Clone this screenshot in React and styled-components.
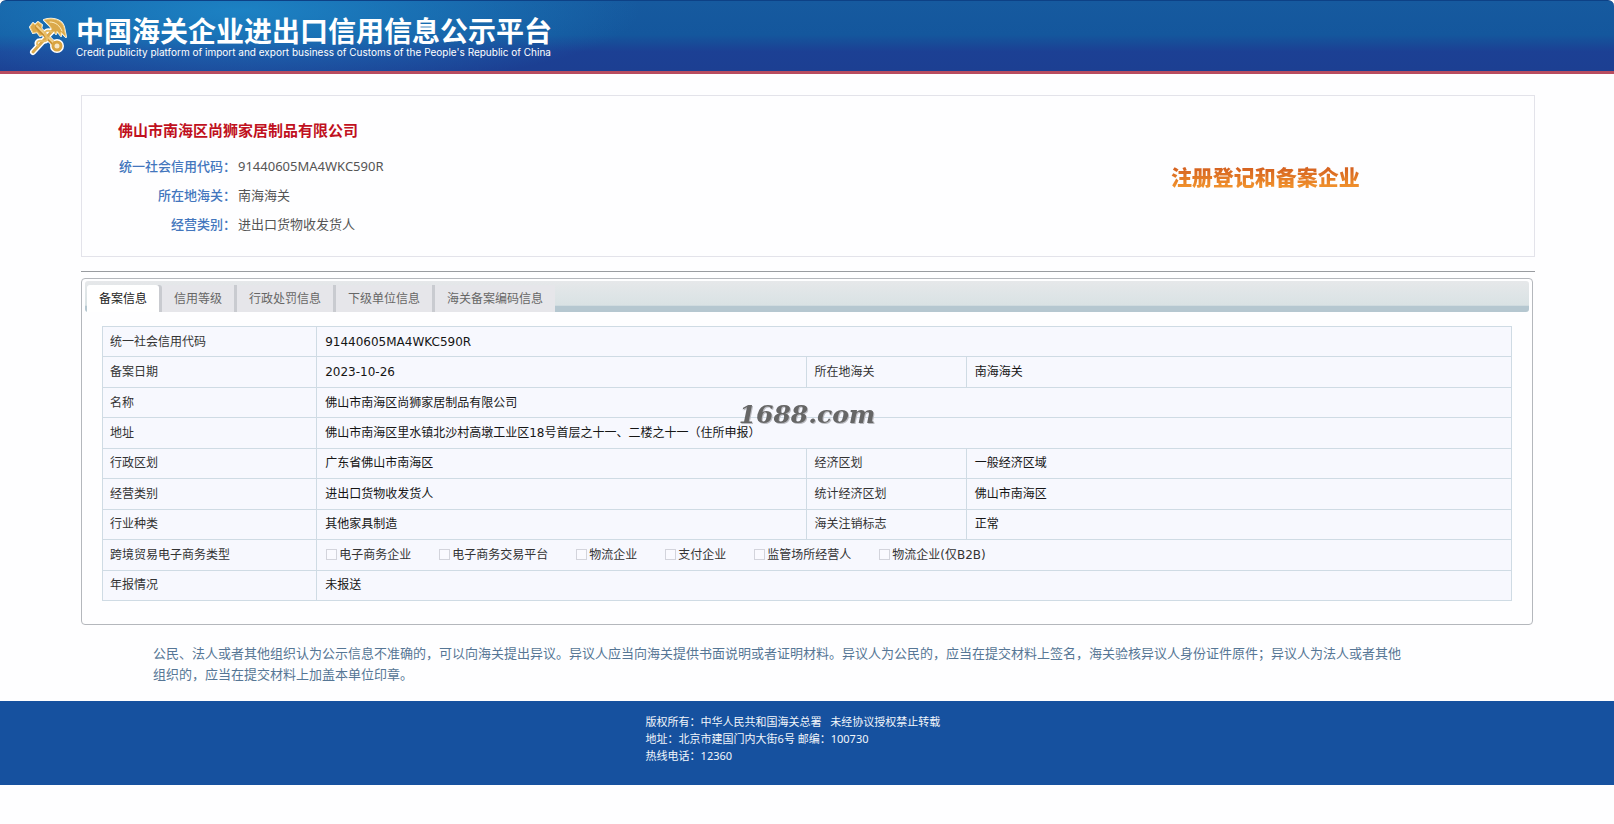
import * as React from "react";
import styled, { createGlobalStyle } from "styled-components";

const GlobalStyle = createGlobalStyle`
  * {
    box-sizing: border-box;
  }
  body {
    margin: 0;
    background: #fefeff;
    color: #333;
    font-family: "Noto Sans", "Noto Sans CJK SC", sans-serif;
    font-size: 12px;
  }
`;

const Header = styled.header`
  display: flex;
  align-items: center;
  gap: 8px;
  height: 74px;
  padding: 0 24px 1px;
  border-top: 1px solid #0d4186;
  border-bottom: 3px solid #b84c60;
  border-radius: 6px 6px 0 0;
  background: radial-gradient(
      ellipse 400px 80px at 240px 10px,
      rgba(30, 140, 205, 0.8),
      rgba(30, 140, 205, 0)
    ),
    linear-gradient(#165a9f, #14579d 48%, #1c4094 72%, #1c3f92);
  color: #fff;
`;
const Emblem = styled.svg`
  width: 44px;
  height: 44px;
  flex: none;
`;
const Brand = styled.div`
  display: flex;
  flex-direction: column;
  white-space: nowrap;
`;
const BrandTitle = styled.h1`
  margin: 0;
  font-size: 28px;
  line-height: 32px;
  font-weight: 700;
`;
const BrandSubtitle = styled.span`
  font-family: Inter, "Liberation Sans", sans-serif;
  font-size: 10px;
  line-height: 10px;
`;

const Content = styled.main`
  margin: 0 79px 0 81px;
  padding-top: 21px;
`;
const Summary = styled.section`
  display: flex;
  min-height: 162px;
  border: 1px solid #e3e3ea;
`;
const SummaryMain = styled.div`
  flex: 1;
  padding: 22px 0 0 36px;
`;
const CompanyName = styled.h2`
  margin: 0 0 10px;
  color: #c01020;
  font-size: 15px;
  line-height: 24px;
  font-weight: 700;
`;
const Facts = styled.dl`
  display: grid;
  grid-template-columns: 118px 1fr;
  grid-auto-rows: 29px;
  column-gap: 2px;
  margin: 0;
  font-size: 13px;
  line-height: 29px;
`;
const FactLabel = styled.dt`
  color: #4376bd;
  font-weight: 500;
  text-align: right;
`;
const FactValue = styled.dd`
  margin: 0;
  color: #555;
`;
const StatusColumn = styled.div`
  width: 37%;
  padding-top: 65px;
  text-align: center;
`;
const Status = styled.strong`
  display: inline-block;
  background: linear-gradient(#d4601f 20%, #f0902c 80%);
  background-clip: text;
  color: transparent;
  font-size: 21px;
  line-height: 32px;
  font-weight: 900;
`;
const Divider = styled.hr`
  height: 1px;
  margin: 14px 0 6px;
  border: 0;
  background: #999ca0;
`;

const Panel = styled.section`
  margin-right: 2px;
  padding: 2px 3px 23px;
  border: 1px solid #b4b7bc;
  border-radius: 4px;
`;
const TabBar = styled.div`
  display: flex;
  align-items: flex-end;
  gap: 3px;
  height: 31px;
  padding-left: 2px;
  border-radius: 3px;
  background: linear-gradient(#e6e8ea, #d9e2e4 78%, #b5c7d0 82%, #b5c7d0);
`;
const Tab = styled.button`
  height: 27px;
  padding: 0 12px;
  border: 0;
  border-radius: ${(props) => (props.$active ? "3px 3px 0 0" : "0")};
  background: ${(props) => (props.$active ? "#fff" : "#e6e6ea")};
  box-shadow: ${(props) => (props.$last ? "none" : "3px 0 0 #c9cbd0")};
  color: ${(props) => (props.$active ? "#222" : "#666")};
  font: inherit;
  line-height: 27px;
  white-space: nowrap;
  cursor: pointer;
`;

const RecordTable = styled.table`
  width: calc(100% - 34px);
  height: 275px;
  margin: 14px 17px 0;
  border-collapse: collapse;
  table-layout: fixed;
  background: #f7f8fe;
  font-family: "DejaVu Sans", "Noto Sans CJK SC", sans-serif;
  line-height: 18px;
`;
const cellBorder = "1px solid #cfdbe4";
const LabelCell = styled.th`
  padding: 0 7px;
  border: ${cellBorder};
  color: #333;
  font-weight: 400;
  text-align: left;
`;
const ValueCell = styled.td`
  padding: 0 8px;
  border: ${cellBorder};
  color: #151515;
`;
const Options = styled.div`
  display: flex;
  gap: 28px;
  padding-left: 1px;
`;
const Option = styled.label`
  display: flex;
  align-items: center;
  gap: 2px;
  color: #333;
  white-space: nowrap;
`;
const Checkbox = styled.input`
  appearance: none;
  width: 11px;
  height: 11px;
  margin: 0;
  border: 1px solid #d3d4dc;
  background: #fafaff;
`;

const Notice = styled.p`
  margin: 18px 0 16px;
  padding: 0 130px 0 72px;
  color: #567695;
  font-size: 13px;
  line-height: 21px;
`;
const Footer = styled.footer`
  min-height: 84px;
  padding: 12px 0 0 40%;
  background: #16519f;
  color: #f2f6fb;
  font-size: 11px;
  line-height: 17px;
  white-space: pre;
`;
const FooterLine = styled.div``;

const WatermarkLayer = styled.div`
  position: fixed;
  inset: 0;
  display: grid;
  place-items: center;
  padding-top: 4px;
  pointer-events: none;
`;
const Watermark = styled.span`
  color: #666;
  font-family: "DejaVu Serif", serif;
  font-size: 25px;
  font-style: italic;
  font-weight: 700;
  text-shadow: 1px 1px 0 #b9bac0;
`;

const facts = [
  ["统一社会信用代码：", "91440605MA4WKC590R"],
  ["所在地海关：", "南海海关"],
  ["经营类别：", "进出口货物收发货人"],
];

const tabs = [
  "备案信息",
  "信用等级",
  "行政处罚信息",
  "下级单位信息",
  "海关备案编码信息",
];

const businessTypes = [
  "电子商务企业",
  "电子商务交易平台",
  "物流企业",
  "支付企业",
  "监管场所经营人",
  "物流企业(仅B2B)",
];

const BusinessTypes = () => (
  <Options>
    {businessTypes.map((type) => (
      <Option key={type}>
        <Checkbox type="checkbox" disabled />
        {type}
      </Option>
    ))}
  </Options>
);

// each row is label, value and optionally a second label, value
const rows = [
  ["统一社会信用代码", "91440605MA4WKC590R"],
  ["备案日期", "2023-10-26", "所在地海关", "南海海关"],
  ["名称", "佛山市南海区尚狮家居制品有限公司"],
  [
    "地址",
    "佛山市南海区里水镇北沙村高墩工业区18号首层之十一、二楼之十一（住所申报）",
  ],
  ["行政区划", "广东省佛山市南海区", "经济区划", "一般经济区域"],
  ["经营类别", "进出口货物收发货人", "统计经济区划", "佛山市南海区"],
  ["行业种类", "其他家具制造", "海关注销标志", "正常"],
  ["跨境贸易电子商务类型", <BusinessTypes />],
  ["年报情况", "未报送"],
];

// golden key crossed with the winged staff
const CustomsEmblem = () => {
  const wing =
    "M20 6C29 3 38 6 40 13L42 23 37 18 37 22 33 17 32 20 28 15 25 11z";
  const bit = "M6 13l3-4 2 2 3-3 4 3-1 4 3 5-4 2-3-4-4 1z";
  const snake = "M28 18c-6-3-9 1-6 4s1 6-4 5-6 2-4 5";
  return (
    <Emblem viewBox="0 0 44 44" aria-hidden="true">
      <g
        fill="#fff"
        stroke="#fff"
        strokeWidth="2"
        strokeLinejoin="round"
        strokeLinecap="round"
      >
        <path d={wing} />
        <path d={bit} />
        <path d={snake} fill="none" strokeWidth="5" />
        <path d="M13 13l17 17M30 15L9 38" strokeWidth="6" />
        <circle cx="33" cy="32" r="6" />
      </g>
      <g fill="#dba94c" stroke="#efcf85" strokeWidth="1">
        <path d={wing} />
        <path d={bit} />
      </g>
      <g fill="none" strokeLinecap="round">
        <path d="M13 13l17 17" stroke="#c98f30" strokeWidth="4" />
        <path d="M13 12l17 17" stroke="#f1d087" strokeWidth="2" />
        <path d="M30 15L9 38" stroke="#dba94c" strokeWidth="3" />
        <path d={snake} stroke="#e8bd66" strokeWidth="2" />
        <path d="M26 8c6 0 10 4 12 9" stroke="#fff0c2" strokeWidth="1" />
      </g>
      <circle
        cx="33"
        cy="32"
        r="4"
        fill="#f6e6c4"
        stroke="#d9a441"
        strokeWidth="3"
      />
    </Emblem>
  );
};

const App = () => {
  const [activeTab, setActiveTab] = React.useState(0);

  return (
    <>
      <GlobalStyle />
      <Header>
        <CustomsEmblem />
        <Brand>
          <BrandTitle>中国海关企业进出口信用信息公示平台</BrandTitle>
          <BrandSubtitle>
            Credit publicity platform of import and export business of Customs
            of the People's Republic of China
          </BrandSubtitle>
        </Brand>
      </Header>
      <Content>
        <Summary>
          <SummaryMain>
            <CompanyName>佛山市南海区尚狮家居制品有限公司</CompanyName>
            <Facts>
              {facts.map(([label, value]) => (
                <React.Fragment key={label}>
                  <FactLabel>{label}</FactLabel>
                  <FactValue>{value}</FactValue>
                </React.Fragment>
              ))}
            </Facts>
          </SummaryMain>
          <StatusColumn>
            <Status>注册登记和备案企业</Status>
          </StatusColumn>
        </Summary>
        <Divider />
        <Panel>
          <TabBar role="tablist">
            {tabs.map((tab, index) => (
              <Tab
                key={tab}
                type="button"
                role="tab"
                aria-selected={index === activeTab}
                $active={index === activeTab}
                $last={index === tabs.length - 1}
                onClick={() => setActiveTab(index)}
              >
                {tab}
              </Tab>
            ))}
          </TabBar>
          <RecordTable>
            <colgroup>
              <col width="15.2%" />
              <col width="34.8%" />
              <col width="11.3%" />
              <col />
            </colgroup>
            <tbody>
              {rows.map(([label, value, label2, value2]) => (
                <tr key={label}>
                  <LabelCell scope="row">{label}</LabelCell>
                  <ValueCell colSpan={label2 ? 1 : 3}>{value}</ValueCell>
                  {label2 && <LabelCell scope="row">{label2}</LabelCell>}
                  {label2 && <ValueCell>{value2}</ValueCell>}
                </tr>
              ))}
            </tbody>
          </RecordTable>
        </Panel>
        <Notice>
          公民、法人或者其他组织认为公示信息不准确的，可以向海关提出异议。异议人应当向海关提供书面说明或者证明材料。异议人为公民的，应当在提交材料上签名，海关验核异议人身份证件原件；异议人为法人或者其他组织的，应当在提交材料上加盖本单位印章。
        </Notice>
      </Content>
      <Footer>
        <FooterLine>
          {"版权所有：中华人民共和国海关总署   未经协议授权禁止转载"}
        </FooterLine>
        <FooterLine>{"地址：北京市建国门内大街6号 邮编：100730"}</FooterLine>
        <FooterLine>热线电话：12360</FooterLine>
      </Footer>
      <WatermarkLayer>
        <Watermark>1688.com</Watermark>
      </WatermarkLayer>
    </>
  );
};
export default App;
